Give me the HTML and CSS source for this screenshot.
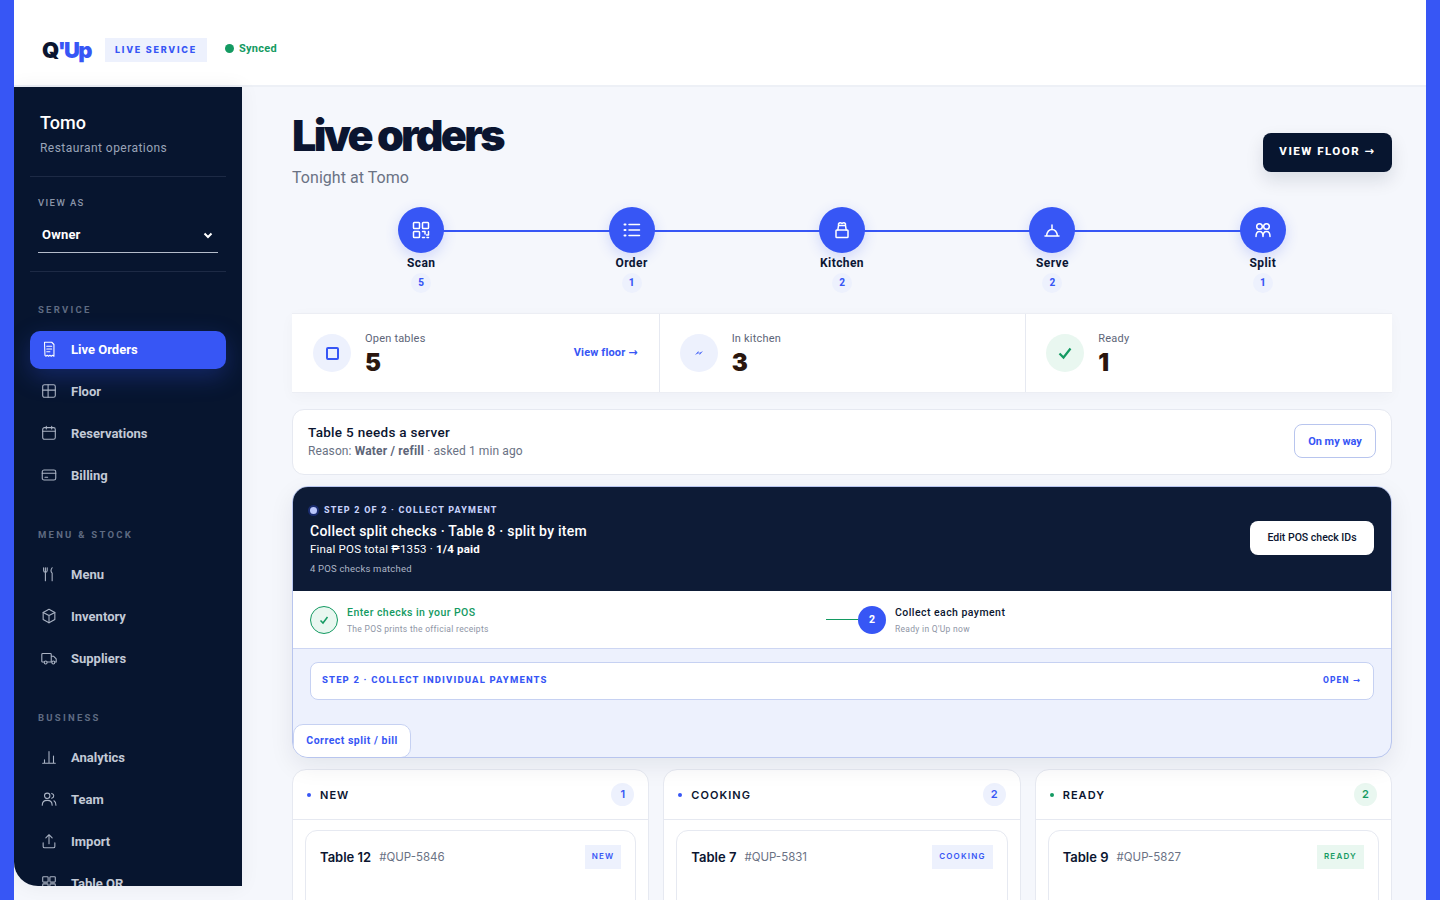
FILE: index.html
```html
<!DOCTYPE html>
<html lang="en">
<head>
    <meta charset="UTF-8">
    <meta name="viewport" content="width=device-width, initial-scale=1.0">
    <title>Q'Up Live Orders</title>
    <link rel="stylesheet" href="styles.css">
</head>
<body>
    <div class="app">
        <header class="topbar">
            <div class="logo"><span class="logo-q">Q</span><span class="logo-up">'Up</span></div>
            <span class="mode-tag">LIVE SERVICE</span>
            <span class="sync"><i class="sync-dot"></i>Synced</span>
        </header>

        <div class="shell">
            <aside class="sidebar">
                <div class="brand">
                    <div class="brand-name">Tomo</div>
                    <div class="brand-sub">Restaurant operations</div>
                </div>
                <div class="view-as">
                    <div class="view-label">VIEW AS</div>
                    <div class="view-select">
                        <span>Owner</span>
                        <svg class="chevron" viewBox="0 0 12 12"><path d="M2.5 4.5 6 8l3.5-3.5"/></svg>
                    </div>
                </div>

                <div class="nav-group nav-service">
                    <div class="nav-title">SERVICE</div>
                    <a class="nav-item active">
                        <svg class="nav-icon" viewBox="0 0 20 20"><path d="M5 2.5h8l2.500 2.500v13l-1.500-1-1.500 1-1.500-1-1.500 1-1.500-1-1.500 1-1-1z"/><path d="M7.500 7h5.500M7.500 10h5.500M7.500 13h3.500"/></svg>
                        Live Orders
                    </a>
                    <a class="nav-item">
                        <svg class="nav-icon" viewBox="0 0 20 20"><rect x="3" y="3" width="14" height="14" rx="2"/><path d="M3 9h14M9 3v14"/></svg>
                        Floor
                    </a>
                    <a class="nav-item">
                        <svg class="nav-icon" viewBox="0 0 20 20"><rect x="3" y="4" width="14" height="13" rx="2"/><path d="M3 8h14M7 2.500v3M13 2.500v3"/></svg>
                        Reservations
                    </a>
                    <a class="nav-item">
                        <svg class="nav-icon" viewBox="0 0 20 20"><rect x="2.500" y="4.500" width="15" height="11" rx="2"/><path d="M2.500 8h15M5.500 12.500h3"/></svg>
                        Billing
                    </a>
                </div>

                <div class="nav-group">
                    <div class="nav-title">MENU &amp; STOCK</div>
                    <a class="nav-item">
                        <svg class="nav-icon" viewBox="0 0 20 20"><path d="M6 3v4.500M4 3v3a2 2 0 0 0 4 0V3M6 8v9.500M13.500 3c-1.500 2-1.500 4.500 0 6v8.500"/></svg>
                        Menu
                    </a>
                    <a class="nav-item">
                        <svg class="nav-icon" viewBox="0 0 20 20"><path d="M10 2.500 16.500 6v8L10 17.500 3.500 14V6z"/><path d="M3.500 6 10 9.500 16.500 6M10 9.500v8"/></svg>
                        Inventory
                    </a>
                    <a class="nav-item">
                        <svg class="nav-icon" viewBox="0 0 20 20"><path d="M4.500 14.500H3a1 1 0 0 1-1-1V6a1 1 0 0 1 1-1h8.500a1 1 0 0 1 1 1v8.500H8M12.500 8H15l3 3v3.500h-1.500M12.500 14.500H13"/><circle cx="6.300" cy="15" r="1.600"/><circle cx="14.800" cy="15" r="1.600"/></svg>
                        Suppliers
                    </a>
                </div>

                <div class="nav-group">
                    <div class="nav-title">BUSINESS</div>
                    <a class="nav-item">
                        <svg class="nav-icon" viewBox="0 0 20 20"><path d="M3 17h14M5 17v-4M10 17V4M15 17V9"/></svg>
                        Analytics
                    </a>
                    <a class="nav-item">
                        <svg class="nav-icon" viewBox="0 0 20 20"><circle cx="8" cy="6.500" r="3"/><path d="M2.500 17c0-3.500 2-5.500 5.500-5.500s5.500 2 5.500 5.500M13 3.800c1.500.4 2.300 1.400 2.300 2.700S14.500 8.800 13 9.200M15.500 12c1.500.8 2.200 2.500 2.200 5"/></svg>
                        Team
                    </a>
                    <a class="nav-item">
                        <svg class="nav-icon" viewBox="0 0 20 20"><path d="M10 13V3M6.500 6.500 10 3l3.500 3.500M3.500 12v4a1.500 1.500 0 0 0 1.500 1.500h10a1.500 1.500 0 0 0 1.500-1.500v-4"/></svg>
                        Import
                    </a>
                    <a class="nav-item">
                        <svg class="nav-icon" viewBox="0 0 20 20"><rect x="3" y="3" width="6" height="6" rx="1"/><rect x="11" y="3" width="6" height="6" rx="1"/><rect x="3" y="11" width="6" height="6" rx="1"/><rect x="11" y="11" width="6" height="6" rx="1"/></svg>
                        Table QR
                    </a>
                </div>
            </aside>

            <main class="main">
                <div class="page-head">
                    <div>
                        <h1>Live orders</h1>
                        <p class="subtitle">Tonight at Tomo</p>
                    </div>
                    <button class="btn-dark">VIEW FLOOR <span class="arrow">→</span></button>
                </div>

                <div class="flow">
                    <div class="flow-step">
                        <div class="flow-circle">
                            <svg viewBox="0 0 20 20"><rect x="2.500" y="2.500" width="6" height="6" rx=".8"/><rect x="11.500" y="2.500" width="6" height="6" rx=".8"/><rect x="2.500" y="11.500" width="6" height="6" rx=".8"/><path d="M11.500 11.500h2.500v2.500M17.500 11.500v3.500h-2M11.500 17.500h2M16 17.500h1.500"/></svg>
                        </div>
                        <div class="flow-label">Scan</div>
                        <div class="flow-count">5</div>
                    </div>
                    <div class="flow-step">
                        <div class="flow-circle">
                            <svg viewBox="0 0 20 20"><path d="M7 4.500h10.500M7 10h10.500M7 15.500h10.500"/><path class="dots" d="M2.500 4.500h1M2.500 10h1M2.500 15.500h1"/></svg>
                        </div>
                        <div class="flow-label">Order</div>
                        <div class="flow-count">1</div>
                    </div>
                    <div class="flow-step">
                        <div class="flow-circle">
                            <svg viewBox="0 0 20 20"><rect x="4" y="10" width="12" height="7.500" rx=".8"/><path d="M5.800 10 6.500 5.500h7l.7 4.500M6.500 5.500C6 3 8 2 10 3.500c2-1.500 4-.5 3.500 2"/></svg>
                        </div>
                        <div class="flow-label">Kitchen</div>
                        <div class="flow-count">2</div>
                    </div>
                    <div class="flow-step">
                        <div class="flow-circle">
                            <svg viewBox="0 0 20 20"><path d="M3 16h14M4.500 16c.5-3.500 2.500-6.500 5.500-6.500s5 3 5.500 6.500M10 9.500V5"/></svg>
                        </div>
                        <div class="flow-label">Serve</div>
                        <div class="flow-count">2</div>
                    </div>
                    <div class="flow-step">
                        <div class="flow-circle">
                            <svg viewBox="0 0 20 20"><circle cx="6.500" cy="6.500" r="2.800"/><circle cx="13.500" cy="6.500" r="2.800"/><path d="M3 16.500c0-3 1.300-5 3.500-5s3.500 2 3.500 5M10 16.500c0-3 1.300-5 3.500-5s3.500 2 3.500 5"/></svg>
                        </div>
                        <div class="flow-label">Split</div>
                        <div class="flow-count">1</div>
                    </div>
                </div>

                <div class="stats">
                    <div class="stat">
                        <div class="stat-icon"><span class="stat-square"></span></div>
                        <div class="stat-text">
                            <div class="stat-label">Open tables</div>
                            <div class="stat-value">5</div>
                        </div>
                        <a class="stat-link">View floor <span class="arrow">→</span></a>
                    </div>
                    <div class="stat">
                        <div class="stat-icon">
                            <svg class="stat-svg" viewBox="0 0 12 12"><path d="M2 8 5.500 4v2.500L10 4 6.500 8V5.500z"/></svg>
                        </div>
                        <div class="stat-text">
                            <div class="stat-label">In kitchen</div>
                            <div class="stat-value">3</div>
                        </div>
                    </div>
                    <div class="stat">
                        <div class="stat-icon stat-icon-green">
                            <svg class="stat-check" viewBox="0 0 16 16"><path d="M2.500 8.500 6.500 12.500 13.500 3.500"/></svg>
                        </div>
                        <div class="stat-text">
                            <div class="stat-label">Ready</div>
                            <div class="stat-value">1</div>
                        </div>
                    </div>
                </div>

                <div class="alert">
                    <div>
                        <div class="alert-title">Table 5 needs a server</div>
                        <div class="alert-sub">Reason: <strong>Water / refill</strong> · asked 1 min ago</div>
                    </div>
                    <button class="btn-outline">On my way</button>
                </div>

                <section class="panel">
                    <div class="panel-head">
                        <div>
                            <div class="panel-kicker"><i class="kicker-dot"></i>STEP 2 OF 2 · COLLECT PAYMENT</div>
                            <div class="panel-title">Collect split checks · Table 8 · split by item</div>
                            <div class="panel-total">Final POS total ₱1353 · <strong>1/4 paid</strong></div>
                            <div class="panel-note">4 POS checks matched</div>
                        </div>
                        <button class="btn-white">Edit POS check IDs</button>
                    </div>
                    <div class="panel-steps">
                        <div class="pstep">
                            <div class="pstep-done">
                                <svg viewBox="0 0 12 12"><path d="M2.500 6.500 5 9l4.500-6"/></svg>
                            </div>
                            <div>
                                <div class="pstep-title pstep-title-done">Enter checks in your POS</div>
                                <div class="pstep-sub">The POS prints the official receipts</div>
                            </div>
                        </div>
                        <div class="pstep pstep-current">
                            <span class="pstep-line"></span>
                            <div class="pstep-num">2</div>
                            <div>
                                <div class="pstep-title">Collect each payment</div>
                                <div class="pstep-sub">Ready in Q'Up now</div>
                            </div>
                        </div>
                    </div>
                    <div class="panel-body">
                        <div class="panel-row">
                            <span class="row-title">STEP 2 · COLLECT INDIVIDUAL PAYMENTS</span>
                            <span class="row-open">OPEN <span class="arrow">→</span></span>
                        </div>
                        <button class="btn-correct">Correct split / bill</button>
                    </div>
                </section>

                <div class="board">
                    <div class="col">
                        <div class="col-head">
                            <i class="col-dot"></i><span class="col-name">NEW</span>
                            <span class="col-count">1</span>
                        </div>
                        <div class="col-body">
                            <div class="ticket">
                                <span class="ticket-table">Table 12</span>
                                <span class="ticket-id">#QUP-5846</span>
                                <span class="ticket-badge">NEW</span>
                            </div>
                        </div>
                    </div>
                    <div class="col">
                        <div class="col-head">
                            <i class="col-dot"></i><span class="col-name">COOKING</span>
                            <span class="col-count">2</span>
                        </div>
                        <div class="col-body">
                            <div class="ticket">
                                <span class="ticket-table">Table 7</span>
                                <span class="ticket-id">#QUP-5831</span>
                                <span class="ticket-badge">COOKING</span>
                            </div>
                        </div>
                    </div>
                    <div class="col col-ready">
                        <div class="col-head">
                            <i class="col-dot"></i><span class="col-name">READY</span>
                            <span class="col-count">2</span>
                        </div>
                        <div class="col-body">
                            <div class="ticket">
                                <span class="ticket-table">Table 9</span>
                                <span class="ticket-id">#QUP-5827</span>
                                <span class="ticket-badge">READY</span>
                            </div>
                        </div>
                    </div>
                </div>
            </main>
        </div>
    </div>
</body>
</html>
```

FILE: styles.css
```css
* {
    box-sizing: border-box;
}
html, body {
    height: 100%;
}
body {
    margin: 0;
    padding: 0 14px;
    overflow: hidden;
    background-color: #3756f5;
    font-family: Roboto, Arial, sans-serif;
    color: #0b1530;
}
button {
    font-family: inherit;
    cursor: pointer;
}
.arrow {
    font-family: "DejaVu Sans", sans-serif;
    font-weight: 700;
}
.app {
    height: 900px;
    overflow: hidden;
    background-color: #f5f7fc;
}

/* top bar */
.topbar {
    height: 87px;
    display: flex;
    align-items: center;
    padding: 14px 0 0 28px;
    background-color: #fff;
    border-bottom: 2px solid #edf0f6;
}
.logo {
    font-family: Inter, sans-serif;
    font-weight: 900;
    font-size: 22px;
    letter-spacing: -1.7px;
    width: 63px;
}
.logo-q {
    color: #0b1530;
}
.logo-up {
    color: #3756f5;
}
.mode-tag {
    padding: 6px 10px;
    background-color: #edf1fd;
    color: #3756f5;
    font-family: Inter, sans-serif;
    font-size: 9px;
    font-weight: 800;
    letter-spacing: 1.75px;
    line-height: 12px;
}
.sync {
    margin-left: 18px;
    margin-top: -3px;
    display: flex;
    align-items: center;
    gap: 5px;
    font-size: 11px;
    font-weight: 700;
    letter-spacing: .3px;
    color: #149a62;
}
.sync-dot {
    width: 9px;
    height: 9px;
    border-radius: 50%;
    background-color: #149a62;
}

.shell {
    display: flex;
    align-items: flex-start;
}

/* sidebar */
.sidebar {
    width: 228px;
    height: 799px;
    flex-shrink: 0;
    overflow: hidden;
    padding: 0 16px;
    background-color: #07152f;
    border-bottom-left-radius: 24px;
    box-shadow: 0 0 20px rgba(11, 21, 48, .06);
    position: relative;
}
.brand {
    padding: 25px 10px 20px;
    border-bottom: 1px solid #1d2a45;
}
.brand-name {
    font-size: 18px;
    line-height: 22px;
    font-weight: 500;
    color: #fff;
}
.brand-sub {
    margin-top: 7px;
    font-size: 12px;
    line-height: 15px;
    letter-spacing: .45px;
    color: #9aa4b8;
}
.view-as {
    padding: 20px 8px 18px;
    border-bottom: 1px solid #1d2a45;
}
.view-label {
    font-size: 9.5px;
    line-height: 12px;
    letter-spacing: 1.4px;
    font-weight: 500;
    color: #8a94a8;
}
.view-select {
    height: 36px;
    margin-top: 8px;
    padding: 0 4px;
    display: flex;
    align-items: center;
    justify-content: space-between;
    border-bottom: 1px solid #b4bccb;
    color: #fff;
    font-size: 13px;
    font-weight: 700;
    letter-spacing: .2px;
}
.chevron {
    width: 12px;
    height: 12px;
    fill: none;
    stroke: #fff;
    stroke-width: 2;
}
.nav-group {
    margin-top: 34px;
}
.nav-service {
    margin-top: 32px;
}
.nav-title {
    padding-left: 8px;
    font-size: 9.5px;
    line-height: 12px;
    font-weight: 700;
    letter-spacing: 2.25px;
    color: #5f6b82;
    margin-bottom: 15px;
}
.nav-item {
    height: 38px;
    margin-bottom: 4px;
    padding: 0 0 2px 10px;
    display: flex;
    align-items: center;
    gap: 13px;
    border-radius: 10px;
    font-size: 13px;
    font-weight: 700;
    color: #c2c9d6;
}
.nav-item.active {
    background-color: #3756f5;
    color: #fff;
    box-shadow: 0 8px 24px rgba(55, 86, 245, .28);
}
.nav-icon {
    width: 18px;
    height: 18px;
    flex-shrink: 0;
    fill: none;
    stroke: #aab3c4;
    stroke-width: 1.2;
    stroke-linejoin: round;
    stroke-linecap: round;
}
.active .nav-icon {
    stroke: #fff;
}

/* main column */
.main {
    flex: 1;
    min-width: 0;
    padding: 0 34px 0 50px;
}
.page-head {
    height: 98px;
    display: flex;
    justify-content: space-between;
    align-items: flex-start;
    padding-top: 21px;
}
h1 {
    margin: 0;
    font-family: Inter, sans-serif;
    font-size: 43px;
    line-height: 54px;
    font-weight: 900;
    letter-spacing: -2.65px;
    color: #0b1530;
}
.subtitle {
    margin: 6px 0 0;
    font-size: 16px;
    line-height: 20px;
    letter-spacing: .05px;
    color: #6a7284;
}
.btn-dark {
    margin-top: 25px;
    width: 129px;
    height: 39px;
    padding: 0 0 3px;
    border: none;
    border-radius: 8px;
    background-color: #07152f;
    color: #fff;
    font-size: 11.5px;
    font-weight: 800;
    letter-spacing: 1.5px;
    box-shadow: 0 8px 18px rgba(11, 21, 48, .12);
}

/* flow steps */
.flow {
    display: flex;
    padding: 22px 24px 0;
    height: 128px;
}
.flow-step {
    flex: 1;
    position: relative;
    display: flex;
    flex-direction: column;
    align-items: center;
}
.flow-step:not(:last-child)::after {
    content: "";
    position: absolute;
    top: 23px;
    left: 50%;
    width: 100%;
    height: 2px;
    background-color: #3756f5;
}
.flow-circle {
    width: 46px;
    height: 46px;
    z-index: 1;
    border-radius: 50%;
    background-color: #3756f5;
    box-shadow: 0 4px 14px rgba(55, 86, 245, .2);
    display: flex;
    align-items: center;
    justify-content: center;
}
.flow-circle svg {
    width: 20px;
    height: 20px;
    fill: none;
    stroke: #fff;
    stroke-width: 1.5;
    stroke-linecap: round;
    stroke-linejoin: round;
}
.flow-circle .dots {
    stroke-width: 2;
}
.flow-label {
    margin-top: 3px;
    font-size: 12px;
    line-height: 15px;
    font-weight: 700;
    letter-spacing: .4px;
}
.flow-count {
    margin-top: 2px;
    width: 20px;
    height: 20px;
    border-radius: 50%;
    background-color: #edf1fd;
    color: #3756f5;
    font-size: 10px;
    font-weight: 800;
    line-height: 20px;
    text-align: center;
}

/* stats strip */
.stats {
    height: 80px;
    display: grid;
    grid-template-columns: repeat(3, 1fr);
    background-color: #fff;
    border-top: 1px solid #eceef4;
    border-bottom: 1px solid #eceef4;
    box-shadow: 0 4px 14px rgba(11, 21, 48, .03);
}
.stat {
    display: flex;
    align-items: center;
    padding: 0 20px;
    border-left: 1px solid #e6e9f1;
}
.stat:first-child {
    border-left-color: transparent;
}
.stat-icon {
    width: 38px;
    height: 38px;
    border-radius: 50%;
    background-color: #edf1fd;
    display: flex;
    align-items: center;
    justify-content: center;
    flex-shrink: 0;
}
.stat-icon-green {
    background-color: #e9f7f0;
}
.stat-square {
    width: 13px;
    height: 13px;
    border: 2px solid #3756f5;
    border-radius: 2px;
}
.stat-svg {
    width: 12px;
    height: 12px;
    fill: #3756f5;
}
.stat-check {
    width: 16px;
    height: 16px;
    fill: none;
    stroke: #149a62;
    stroke-width: 2.2;
}
.stat-text {
    margin-left: 14px;
    padding-top: 2px;
    flex: 1;
}
.stat-label {
    font-size: 11px;
    line-height: 14px;
    letter-spacing: .2px;
    color: #5d6578;
}
.stat-value {
    margin-top: 4px;
    font-family: Inter, sans-serif;
    font-size: 24px;
    line-height: 26px;
    font-weight: 900;
    color: #2a160e;
}
.stat-link {
    padding-bottom: 2px;
    font-size: 11px;
    font-weight: 700;
    letter-spacing: .15px;
    color: #3756f5;
    margin-right: 1px;
}

/* server alert */
.alert {
    margin-top: 16px;
    height: 66px;
    padding: 0 15px 2px;
    display: flex;
    align-items: center;
    justify-content: space-between;
    background-color: #fff;
    border: 1px solid #e6e9f1;
    border-radius: 12px;
}
.alert-title {
    font-size: 13.5px;
    line-height: 17px;
    font-weight: 500;
    letter-spacing: .3px;
}
.alert-sub {
    margin-top: 3px;
    font-size: 12px;
    line-height: 15px;
    letter-spacing: .1px;
    color: #6a7284;
}
.alert-sub strong {
    color: #5d6578;
    letter-spacing: .2px;
}
.btn-outline {
    width: 82px;
    height: 34px;
    background-color: #fff;
    border: 1px solid #b8c5ee;
    border-radius: 8px;
    color: #3756f5;
    font-size: 11px;
    font-weight: 700;
}

/* payment panel */
.panel {
    margin-top: 11px;
    height: 272px;
    position: relative;
    z-index: 1;
    overflow: hidden;
    background-color: #edf1fd;
    border: 1px solid #b8c5ee;
    border-radius: 16px;
    box-shadow: 0 8px 24px rgba(11, 21, 48, .08);
}
.panel-head {
    height: 104px;
    padding: 17px 17px 0;
    display: flex;
    justify-content: space-between;
    background-color: #0d1b36;
    color: #fff;
}
.panel-kicker {
    display: flex;
    align-items: center;
    gap: 7px;
    font-size: 9px;
    line-height: 12px;
    font-weight: 800;
    letter-spacing: 1.2px;
    color: #c6d1fb;
}
.kicker-dot {
    width: 7px;
    height: 7px;
    border-radius: 50%;
    background-color: #b9c6fb;
    box-shadow: 0 0 0 2px rgba(55, 86, 245, .3);
}
.panel-title {
    margin-top: 6px;
    font-size: 14px;
    line-height: 18px;
    font-weight: 500;
    letter-spacing: .25px;
}
.panel-total {
    margin-top: 2px;
    font-size: 11.5px;
    line-height: 15px;
    letter-spacing: .2px;
}
.panel-note {
    margin-top: 5px;
    font-size: 9.5px;
    line-height: 13px;
    letter-spacing: .2px;
    color: #aeb6c6;
}
.btn-white {
    margin-top: 17px;
    width: 124px;
    height: 34px;
    padding: 0 0 1px;
    border: none;
    border-radius: 8px;
    background-color: #fff;
    color: #0b1530;
    font-size: 10.5px;
    font-weight: 500;
}
.panel-steps {
    height: 58px;
    display: grid;
    grid-template-columns: 1fr 1fr;
    background-color: #fff;
    border-bottom: 1px solid #cdd6f3;
}
.pstep {
    display: flex;
    align-items: center;
    gap: 9px;
    padding-left: 17px;
}
.pstep-current {
    padding-left: 0;
}
.pstep-done {
    width: 28px;
    height: 28px;
    border-radius: 50%;
    border: 1px solid #149a62;
    background-color: #e9f7f0;
    display: flex;
    align-items: center;
    justify-content: center;
}
.pstep-done svg {
    width: 12px;
    height: 12px;
    fill: none;
    stroke: #149a62;
    stroke-width: 1.5;
}
.pstep-line {
    width: 32px;
    height: 1px;
    margin-left: -16px;
    margin-right: -9px;
    background-color: #149a62;
}
.pstep-num {
    width: 28px;
    height: 28px;
    border-radius: 50%;
    background-color: #3756f5;
    color: #fff;
    font-size: 10.5px;
    font-weight: 800;
    line-height: 28px;
    text-align: center;
}
.pstep-title {
    padding-top: 2px;
    font-size: 10.5px;
    line-height: 14px;
    font-weight: 500;
    letter-spacing: .45px;
}
.pstep-sub {
    margin-top: 4px;
    font-size: 8.5px;
    line-height: 11px;
    letter-spacing: .3px;
    color: #8e95a5;
}
.pstep-title-done {
    color: #149a62;
}
.panel-body {
    padding: 13px 17px 0;
}
.panel-row {
    height: 38px;
    padding: 0 12px 3px 11px;
    display: flex;
    align-items: center;
    justify-content: space-between;
    background-color: #fff;
    border: 1px solid #c6d1f2;
    border-radius: 8px;
    color: #3756f5;
    font-weight: 800;
}
.row-title {
    font-size: 9.5px;
    letter-spacing: 1.15px;
}
.row-open {
    font-size: 8.5px;
    letter-spacing: 1.1px;
}
.btn-correct {
    display: block;
    margin: 24px 0 0 -17px;
    width: 118px;
    height: 34px;
    padding: 0 0 2px;
    background-color: #fff;
    border: 1px solid #c6d1f2;
    border-radius: 10px;
    color: #3756f5;
    font-size: 10.5px;
    font-weight: 700;
    letter-spacing: .5px;
}

/* order columns */
.board {
    margin-top: 11px;
    display: grid;
    grid-template-columns: repeat(3, 1fr);
    gap: 14px;
}
.col {
    height: 200px;
    background-color: #fff;
    border: 1px solid #e6e9f1;
    border-radius: 14px;
}
.col-head {
    height: 50px;
    padding: 0 14px;
    display: flex;
    align-items: center;
    border-bottom: 1px solid #e6e9f1;
}
.col-dot {
    width: 4px;
    height: 4px;
    border-radius: 50%;
    background-color: #3756f5;
}
.col-name {
    margin-left: 9px;
    flex: 1;
    font-family: Inter, sans-serif;
    font-size: 11px;
    font-weight: 600;
    letter-spacing: 1.05px;
}
.col-count {
    width: 23px;
    height: 23px;
    border-radius: 50%;
    background-color: #edf1fd;
    color: #3756f5;
    font-family: Inter, sans-serif;
    font-size: 11px;
    font-weight: 600;
    line-height: 23px;
    text-align: center;
}
.col-body {
    padding: 10px 12px;
}
.ticket {
    height: 120px;
    padding: 14px;
    display: flex;
    align-items: flex-start;
    border: 1px solid #e6e9f1;
    border-radius: 12px;
    font-family: Inter, sans-serif;
}
.ticket-table {
    margin-top: 3px;
    font-size: 13px;
    line-height: 18px;
    font-weight: 600;
}
.ticket-id {
    margin: 3px 0 0 8px;
    flex: 1;
    font-size: 11.5px;
    line-height: 19px;
    color: #6a7284;
}
.ticket-badge {
    padding: 0 7px;
    height: 24px;
    background-color: #edf1fd;
    color: #3756f5;
    font-size: 8px;
    font-weight: 600;
    line-height: 22px;
    letter-spacing: 1.2px;
}
.col-ready .col-dot {
    background-color: #149a62;
}
.col-ready .col-count,
.col-ready .ticket-badge {
    background-color: #e9f7f0;
    color: #149a62;
}
```
